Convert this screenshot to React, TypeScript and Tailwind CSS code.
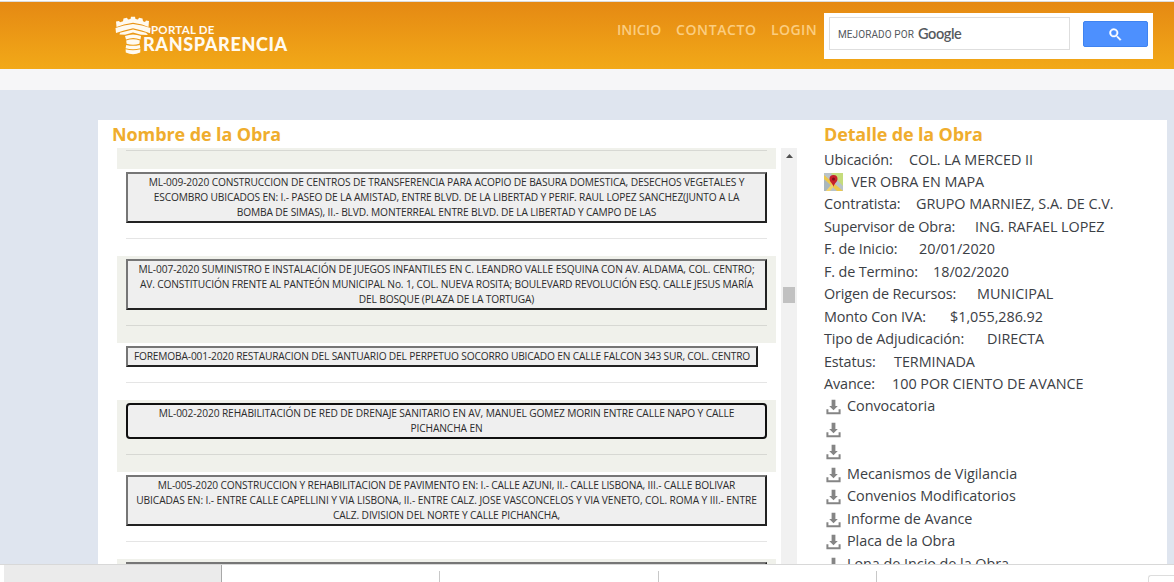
import clsx from 'clsx';

interface Obra {
  lines: { text: string; tracking: string }[];
  active?: boolean;
  fit?: boolean;
}

const obras: Obra[] = [
  {
    lines: [
      {
        text: 'ML-009-2020 CONSTRUCCION DE CENTROS DE TRANSFERENCIA PARA ACOPIO DE BASURA DOMESTICA, DESECHOS VEGETALES Y',
        tracking: 'tracking-[-0.125px]',
      },
      {
        text: 'ESCOMBRO UBICADOS EN: I.- PASEO DE LA AMISTAD, ENTRE BLVD. DE LA LIBERTAD Y PERIF. RAUL LOPEZ SANCHEZ(JUNTO A LA',
        tracking: 'tracking-[-0.15px]',
      },
      {
        text: 'BOMBA DE SIMAS), II.- BLVD. MONTERREAL ENTRE BLVD. DE LA LIBERTAD Y CAMPO DE LAS',
        tracking: 'tracking-[-0.13px]',
      },
    ],
  },
  {
    lines: [
      {
        text: 'ML-007-2020 SUMINISTRO E INSTALACIÓN DE JUEGOS INFANTILES EN C. LEANDRO VALLE ESQUINA CON AV. ALDAMA, COL. CENTRO;',
        tracking: 'tracking-[-0.1px]',
      },
      {
        text: 'AV. CONSTITUCIÓN FRENTE AL PANTEÓN MUNICIPAL No. 1, COL. NUEVA ROSITA; BOULEVARD REVOLUCIÓN ESQ. CALLE JESUS MARÍA',
        tracking: 'tracking-[-0.153px]',
      },
      { text: 'DEL BOSQUE (PLAZA DE LA TORTUGA)', tracking: 'tracking-[-0.16px]' },
    ],
  },
  {
    fit: true,
    lines: [
      {
        text: 'FOREMOBA-001-2020 RESTAURACION DEL SANTUARIO DEL PERPETUO SOCORRO UBICADO EN CALLE FALCON 343 SUR, COL. CENTRO',
        tracking: 'tracking-[-0.164px]',
      },
    ],
  },
  {
    active: true,
    lines: [
      {
        text: 'ML-002-2020 REHABILITACIÓN DE RED DE DRENAJE SANITARIO EN AV, MANUEL GOMEZ MORIN ENTRE CALLE NAPO Y CALLE',
        tracking: 'tracking-[-0.105px]',
      },
      { text: 'PICHANCHA EN', tracking: 'tracking-[-0.1px]' },
    ],
  },
  {
    lines: [
      {
        text: 'ML-005-2020 CONSTRUCCION Y REHABILITACION DE PAVIMENTO EN: I.- CALLE AZUNI, II.- CALLE LISBONA, III.- CALLE BOLIVAR',
        tracking: 'tracking-[-0.145px]',
      },
      {
        text: 'UBICADAS EN: I.- ENTRE CALLE CAPELLINI Y VIA LISBONA, II.- ENTRE CALZ. JOSE VASCONCELOS Y VIA VENETO, COL. ROMA Y III.- ENTRE',
        tracking: 'tracking-[-0.092px]',
      },
      { text: 'CALZ. DIVISION DEL NORTE Y CALLE PICHANCHA,', tracking: 'tracking-[-0.12px]' },
    ],
  },
];

const detalles = [
  { label: 'Contratista:', value: 'GRUPO MARNIEZ, S.A. DE C.V.', width: 'w-[92px]' },
  { label: 'Supervisor de Obra:', value: 'ING. RAFAEL LOPEZ', width: 'w-[151px]' },
  { label: 'F. de Inicio:', value: '20/01/2020', width: 'w-[95px]' },
  { label: 'F. de Termino:', value: '18/02/2020', width: 'w-[109px]' },
  { label: 'Origen de Recursos:', value: 'MUNICIPAL', width: 'w-[153px]' },
  { label: 'Monto Con IVA:', value: '$1,055,286.92', width: 'w-[126px]' },
  { label: 'Tipo de Adjudicación:', value: 'DIRECTA', width: 'w-[163px]' },
  { label: 'Estatus:', value: 'TERMINADA', width: 'w-[70px]' },
  { label: 'Avance:', value: '100 POR CIENTO DE AVANCE', width: 'w-[68px]' },
];

const documentos = [
  'Convocatoria',
  '',
  '',
  'Mecanismos de Vigilancia',
  'Convenios Modificatorios',
  'Informe de Avance',
  'Placa de la Obra',
  'Lona de Incio de la Obra',
];

function TowerLogo() {
  return (
    <svg viewBox="0 0 36 39" className="h-[39px] w-[36px] shrink-0" fill="#fffaf0">
      <path d="M1 5.500 L4 5 L5 6.300 L8 5.200 L8.500 2.500 L12 1.800 L13 3.500 L15.500 3 L16 0.800 L20 0.800 L20.500 3 L23 3.500 L24 1.800 L27.500 2.500 L28 5.200 L30 6 L31 4.500 L34 5 L33.500 11 L27 8.600 L18 6.800 L9 8.600 L1.500 11 Z" />
      <path d="M0.500 12 L9 9.600 L18 7.900 L27 9.600 L35.500 12 L35 17.200 L27 14.600 L18 12.200 L9 14.600 L1 17 Z" />
      <path d="M5 16.800 L18 13.400 L31 16.800 L33 19 L26 18.800 L18 16.600 L10 18.800 L4.500 18.400 Z" />
      <path d="M10 20 Q18 16.800 26 20 L25.500 23.600 Q18 20.600 11 23.600 Z" />
      <path d="M11.200 24.600 Q18 21.800 24.800 24.600 L24.400 27.800 Q18 29.600 11.600 27.800 Z" />
      <path d="M11.200 28.900 Q18 30.600 24.800 28.900 L25.400 32.200 Q18 34.200 10.600 32.200 Z" />
      <path d="M10.600 33.300 Q18 35.300 25.400 33.300 L25.200 36.600 Q18 40 10.800 36.600 Z" />
    </svg>
  );
}

function SearchIcon() {
  return (
    <svg viewBox="0 0 13 13" className="size-[13px]">
      <path
        fill="#fff"
        stroke="#fff"
        strokeWidth="0.4"
        d="M4.8 0.5a4.3 4.3 0 1 0 2.6 7.7l.4.4v.7l3.3 3.2 1-1-3.2-3.3h-.7l-.3-.4A4.3 4.3 0 0 0 4.8.5Zm0 1.5a2.8 2.8 0 1 1 0 5.6 2.8 2.8 0 0 1 0-5.6Z"
      />
    </svg>
  );
}

function DownloadIcon() {
  return (
    <svg viewBox="0 0 15 16" className="h-4 w-[15px] shrink-0" fill="#858585">
      <path d="M5.6 0.7h3.8V7h2.4L7.5 11.2 3.2 7h2.4Z" />
      <path d="M0.4 10.2h2v3h10.2v-3h2v5.1H0.4Z" />
    </svg>
  );
}

function MapIcon() {
  return (
    <svg viewBox="0 0 19 18" className="h-[18px] w-[19px] shrink-0">
      <rect width="19" height="18" fill="#b9c3c8" />
      <path d="M7 0H19V13L12 6Z" fill="#c5dc7c" />
      <path d="M0 6 7 12 2 18H0Z" fill="#a9b7bd" />
      <path d="M0 2 19 18H13L0 6Z" fill="#ecc84c" />
      <path d="M8 11 2 18H6L10 13Z" fill="#f2d469" />
      <path d="M9.500 14C9 10.500 5.500 9 5.500 6a4 4 0 0 1 8 0c0 3-3.500 4.500-4 8Z" fill="#c8202a" />
      <circle cx="9.500" cy="6" r="1.500" fill="#7d1015" />
    </svg>
  );
}

function Header() {
  return (
    <header className="flex h-[67px] bg-linear-to-b from-[#e58913] to-[#f2a918]">
      <div className="flex w-[616px] shrink-0 pt-[14px] pl-[115px] text-[#fffaf0]">
        <TowerLogo />
        <div className="-ml-px flex flex-col pt-[7px] font-['Lato',sans-serif] whitespace-nowrap">
          <span className="pl-px text-[11.5px] leading-[13px] font-bold tracking-[0.25px]">PORTAL DE</span>
          <span className="-ml-[7px] text-[18px] leading-[16px] font-black tracking-[0.65px]">RANSPARENCIA</span>
        </div>
      </div>
      <nav className="flex w-[208px] shrink-0 pt-[18px] pl-px text-[14px] leading-[20px] font-semibold whitespace-nowrap text-[#fbcd80]">
        <a className="w-[59px] tracking-[0.1px]">INICIO</a>
        <a className="w-[95px] tracking-[0.6px]">CONTACTO</a>
        <a className="tracking-[0.4px]">LOGIN</a>
      </nav>
      <div className="mt-[11px] flex h-[46px] w-[329px] bg-white pt-[4px] pl-[5px]">
        <div className="flex h-[33px] w-[241px] items-center border border-[#dedede] pl-[8px] text-[#55595e]">
          <span className="w-[80px] pt-px font-['Roboto',sans-serif] text-[10px] tracking-[0.1px] whitespace-nowrap">
            MEJORADO POR
          </span>
          <span className="font-['Lato',sans-serif] text-[14.5px] font-semibold tracking-[-0.4px]">Google</span>
        </div>
        <button className="mt-[4px] ml-[13px] flex h-[26px] w-[65px] items-center justify-center rounded-[2px] border border-[#3f83f0] bg-[#4d90fe]">
          <SearchIcon />
        </button>
      </div>
    </header>
  );
}

function ObraRow({ obra, shaded }: { obra: Obra; shaded: boolean }) {
  return (
    <li className={clsx('flex flex-col items-start px-[9px] pt-[3px] pb-[17px]', shaded && 'bg-[#f0f1eb]')}>
      <button
        className={clsx(
          'flex flex-col items-center border-2 bg-[#efefef] py-px',
          obra.fit ? 'w-[632px]' : 'w-full',
          obra.active
            ? 'rounded-[4px] border-[#101010]'
            : 'border-t-[#767676] border-r-[#222222] border-b-[#222222] border-l-[#767676]',
        )}
      >
        {obra.lines.map(line => (
          <span
            key={line.text}
            className={clsx('text-[10.2px] leading-[15px] whitespace-nowrap text-[#2c2c2c]', line.tracking)}
          >
            {line.text}
          </span>
        ))}
      </button>
      <hr className="mt-[15px] w-full border-t border-black/10" />
    </li>
  );
}

function Scrollbar() {
  return (
    <div className="flex w-4 shrink-0 flex-col items-center bg-[#f1f1f1]">
      <svg viewBox="0 0 7 4" className="mt-[6px] h-1 w-[7px]" fill="#505050">
        <path d="M0 4 3.500 0 7 4Z" />
      </svg>
      <div className="mt-[129px] h-4 w-3 bg-[#c1c1c1]" />
    </div>
  );
}

function Detalle() {
  return (
    <section className="w-[343px] shrink-0 text-[14.4px] leading-[22.45px] tracking-[-0.04px] whitespace-nowrap text-[#3b4045]">
      <h2 className="pt-[2px] pb-[2.500px] text-[18px] leading-[24px] font-bold tracking-[-0.15px] text-[#efad2d]">
        Detalle de la Obra
      </h2>
      <p className="flex">
        <span className="w-[85px] tracking-[-0.1px]">Ubicación:</span>
        <span>COL. LA MERCED II</span>
      </p>
      <p className="flex items-center gap-2">
        <MapIcon />
        <span>VER OBRA EN MAPA</span>
      </p>
      {detalles.map(({ label, value, width }) => (
        <p key={label} className="flex">
          <span className={clsx('shrink-0 tracking-[-0.13px]', width)}>{label}</span>
          <span>{value}</span>
        </p>
      ))}
      {documentos.map((doc, i) => (
        <p key={i} className="flex h-[22.45px] gap-[6px] pl-[2px]">
          <span className="pt-[4px]">
            <DownloadIcon />
          </span>
          <span>{doc}</span>
        </p>
      ))}
    </section>
  );
}

function DownloadBar() {
  return (
    <footer className="flex h-[18px] border-t border-[#d8d8d8] bg-white pl-1">
      <div className="w-[218px] border-r border-[#a8a8a8] bg-[#ebebeb]" />
      <div className="mt-[6px] w-[218px] border-r border-[#c8c8c8]" />
      <div className="mt-[6px] w-[219px] border-r border-[#c8c8c8]" />
      <div className="mt-[6px] w-[218px] border-r border-[#c8c8c8]" />
      <div className="mt-[10px] ml-auto w-[26px] rounded-tl-[3px] border-t border-l border-[#dddddd]" />
    </footer>
  );
}

export default function App() {
  return (
    <div className="flex h-[582px] w-[1174px] flex-col overflow-hidden bg-white font-['Open_Sans','Noto_Sans',sans-serif]">
      <div className="h-[2px] shrink-0 border-b border-[#dcdcdc] bg-white" />
      <Header />
      <div className="h-[21px] shrink-0 bg-[#f6f6f8]" />
      <main className="flex min-h-0 flex-1 bg-[#dfe5ef] pt-[30px] pl-[98px]">
        <div className="flex w-[1069px] overflow-hidden bg-white">
          <section className="w-[726px] shrink-0">
            <h2 className="pt-[2px] pb-[2px] pl-[14px] text-[18px] leading-[24px] font-bold tracking-[-0.1px] text-[#efad2d]">
              Nombre de la Obra
            </h2>
            <div className="flex h-[416px] overflow-hidden pl-[19px]">
              <ul className="mr-[5px] w-[659px]">
                <li className="h-[21px] bg-[#f0f1eb] px-[9px] pt-[2px]">
                  <hr className="border-t border-black/10" />
                </li>
                {obras.map((obra, i) => (
                  <ObraRow key={i} obra={obra} shaded={i % 2 === 1} />
                ))}
                <li className="h-[60px] bg-[#f0f1eb] px-[9px] pt-[3px]">
                  <div className="h-[36px] border-2 border-t-[#767676] border-r-[#222222] border-b-[#222222] border-l-[#767676] bg-[#efefef]" />
                </li>
              </ul>
              <Scrollbar />
            </div>
          </section>
          <Detalle />
        </div>
      </main>
      <DownloadBar />
    </div>
  );
}
